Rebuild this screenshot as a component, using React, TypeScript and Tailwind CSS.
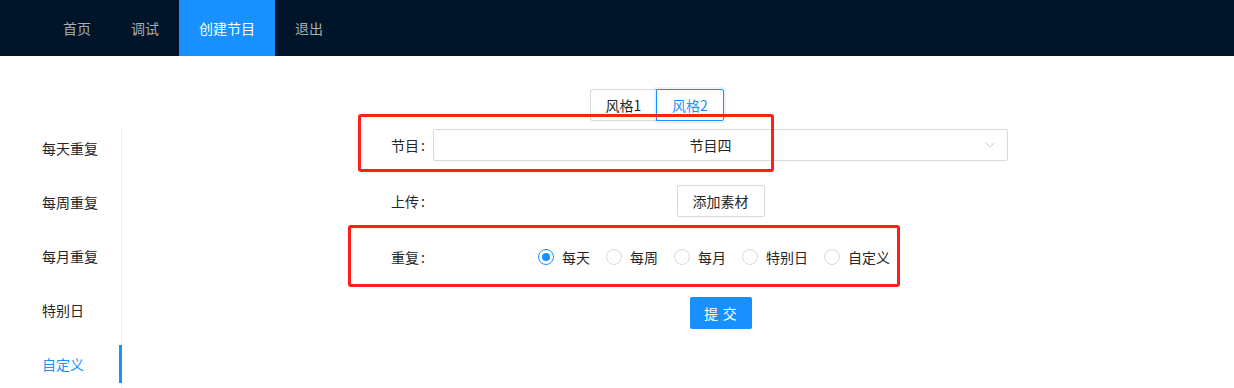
import { ChevronDown } from 'lucide-react';

const NAV = ['首页', '调试', '创建节目', '退出'];
const SIDE = ['每天重复', '每周重复', '每月重复', '特别日', '自定义'];
const REPEATS = ['每天', '每周', '每月', '特别日', '自定义'];

function Label({ text }: { text: string }) {
  return (
    <div className="w-[311px] flex justify-end items-center text-[#262626]">
      <span>{text}</span>
      <span className="ml-[2px] mr-[8px]">:</span>
    </div>
  );
}

function Radio({ label, checked }: { label: string; checked?: boolean }) {
  return (
    <label className="flex items-center mr-[8px]">
      <span
        className={`w-4 h-4 rounded-full border flex items-center justify-center ${
          checked ? 'border-[#1890ff]' : 'border-[#d9d9d9]'
        }`}
      >
        {checked && <span className="w-2 h-2 rounded-full bg-[#1890ff]" />}
      </span>
      <span className="px-[8px] text-[#262626]">{label}</span>
    </label>
  );
}

export default function App() {
  return (
    <div
      className="relative w-full h-[388px] overflow-hidden bg-white text-sm"
      style={{ fontFamily: '"Noto Sans CJK SC", "Noto Sans", sans-serif' }}
    >
      {/* top nav */}
      <div className="h-14 bg-[#001529] flex pl-[43px]">
        {NAV.map((n) => (
          <div
            key={n}
            className={`h-full px-5 flex items-center ${
              n === '创建节目' ? 'bg-[#1890ff] text-white' : 'text-[#a6adb4]'
            }`}
          >
            {n}
          </div>
        ))}
      </div>

      <div className="flex h-[332px]">
        {/* side menu */}
        <div className="w-[122px] pt-[72px] shrink-0">
          <div className="h-full border-r border-[#f0f0f0] flex flex-col gap-[14px]">
            {SIDE.map((s) => (
              <div
                key={s}
                className={`relative h-10 shrink-0 pl-[42px] flex items-center ${
                  s === '自定义' ? 'text-[#1890ff]' : 'text-[#262626]'
                }`}
              >
                {s}
                {s === '自定义' && (
                  <span className="absolute right-[-1px] top-px bottom-px w-[3px] bg-[#1890ff]" />
                )}
              </div>
            ))}
          </div>
        </div>

        {/* content */}
        <div className="flex-1">
          <div className="mt-[33px] ml-[468px] flex h-8">
            <button className="w-[67px] h-8 border border-[#d9d9d9] rounded-l-[2px] text-[#262626]">
              风格1
            </button>
            <button className="w-[68px] h-8 -ml-px border border-[#1890ff] rounded-r-[2px] text-[#1890ff] shadow-[0_0_0_2px_rgba(24,144,255,0.1)]">
              风格2
            </button>
          </div>

          <div className="mt-2 flex flex-col gap-6">
            <div className="flex h-8">
              <Label text="节目" />
              <div className="relative w-[575px] h-8 border border-[#d9d9d9] rounded-[2px] flex items-center justify-center pl-[11px] pr-[31px] text-[#262626]">
                节目四
                <ChevronDown
                  size={16}
                  strokeWidth={1.25}
                  className="absolute right-[9px] top-[7px] text-[#bfbfbf]"
                />
              </div>
            </div>

            <div className="flex h-8">
              <Label text="上传" />
              <div className="w-[575px] flex justify-center">
                <button className="h-8 px-[15px] border border-[#d9d9d9] rounded-[2px] text-[#262626] bg-white">
                  添加素材
                </button>
              </div>
            </div>

            <div className="flex h-8">
              <Label text="重复" />
              <div className="w-[575px] flex items-center pl-[105px]">
                {REPEATS.map((r) => (
                  <Radio key={r} label={r} checked={r === '每天'} />
                ))}
              </div>
            </div>

            <div className="flex h-8">
              <div className="w-[311px]" />
              <div className="w-[575px] flex justify-center">
                <button className="w-[62px] h-8 rounded-[2px] bg-[#1890ff] text-white whitespace-nowrap flex items-center justify-center tracking-[0.34em]">
                  <span className="-mr-[0.34em]">提交</span>
                </button>
              </div>
            </div>
          </div>
        </div>
      </div>

      {/* red annotation boxes */}
      <div className="absolute left-[358px] top-[114px] w-[416px] h-[58px] border-[3px] border-[#ff1f14] rounded-[3px]" />
      <div className="absolute left-[348px] top-[225px] w-[552px] h-[62px] border-[3px] border-[#ff1f14] rounded-[3px]" />
    </div>
  );
}
